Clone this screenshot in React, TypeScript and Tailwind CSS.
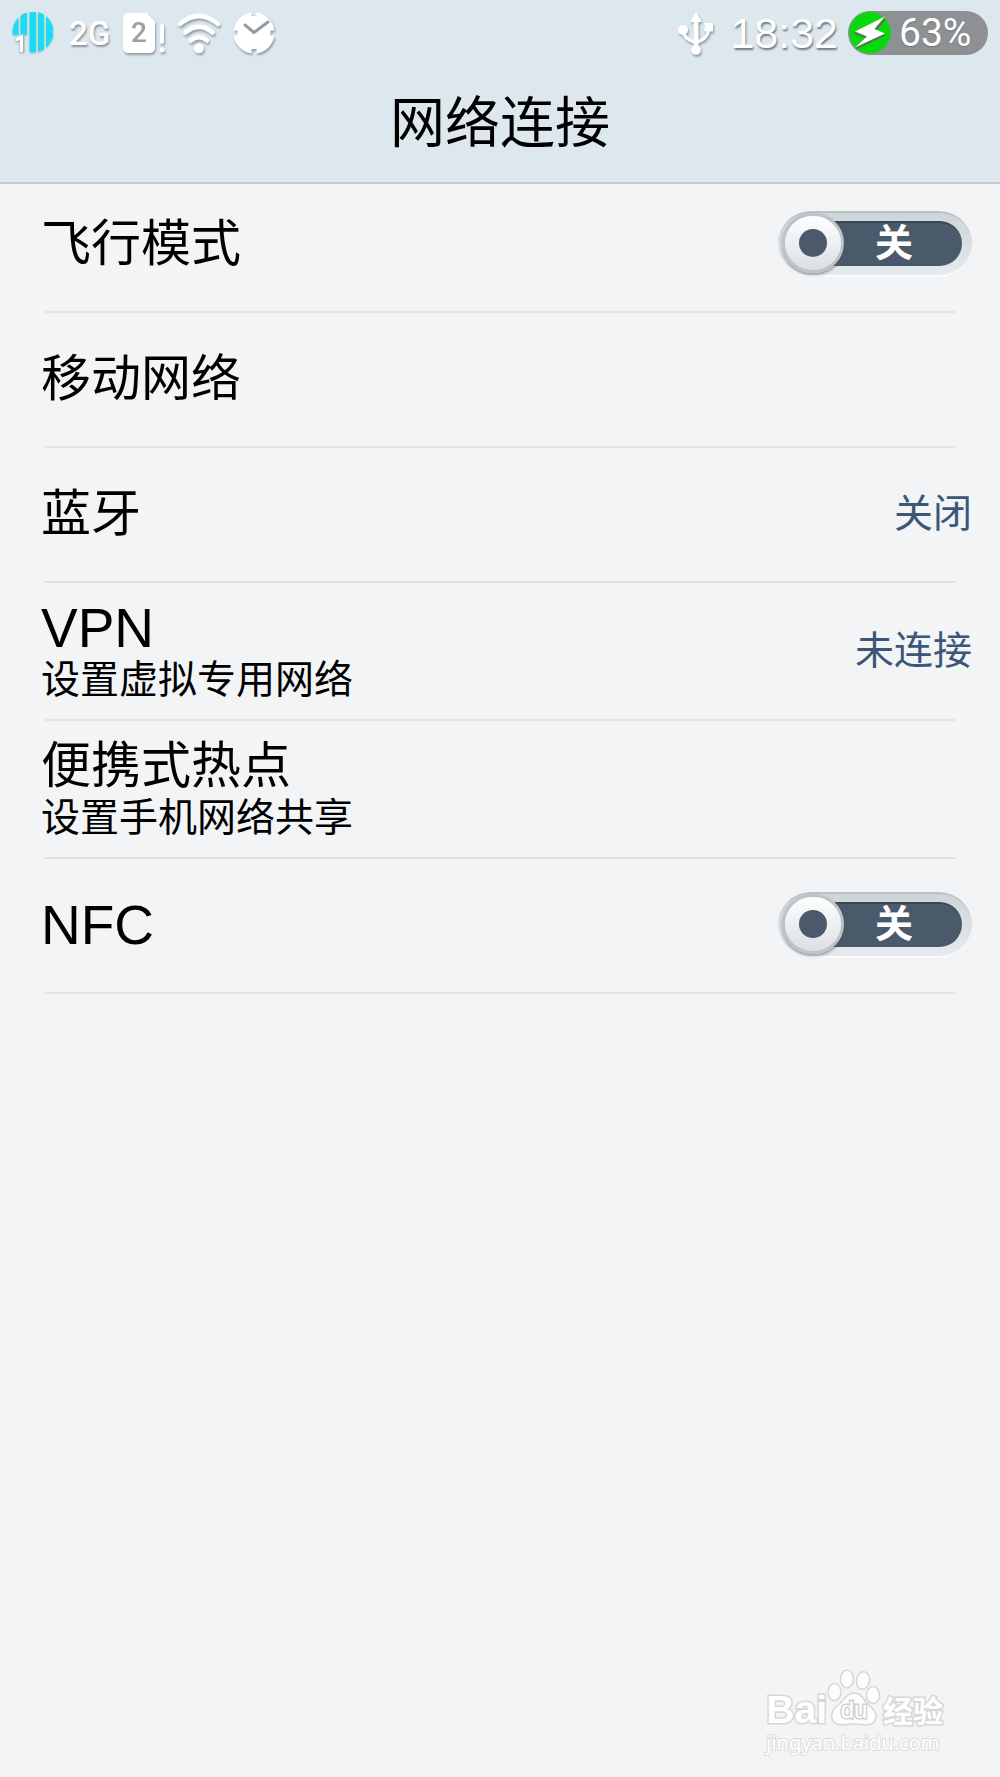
import { useId, useState } from "react";
import type { ReactNode } from "react";

const iconShadow = "shrink-0 drop-shadow-[1px_2px_1px_rgba(90,105,115,0.6)]";

function CarrierIcon() {
  return (
    <svg aria-hidden="true" className="h-[42px] w-[42px] shrink-0 drop-shadow-[0_1px_1px_rgba(90,130,140,0.4)]" viewBox="0 0 42 42">
      <defs>
        <clipPath id="carrier">
          <circle cx="21" cy="20" r="20.5" />
        </clipPath>
      </defs>
      <g clipPath="url(#carrier)" fill="#1cdcf2">
        <rect x="0" y="0" width="6.500" height="23" />
        <rect x="8.500" y="0" width="6.500" height="23" />
        <rect x="17.500" y="0" width="6.500" height="42" />
        <rect x="26" y="0" width="6" height="42" />
        <rect x="34" y="0" width="7" height="42" />
      </g>
      <path d="M4 28.500 L10 25.500 V40.500" fill="none" stroke="#9aa8b0" strokeWidth="4.500" />
      <path d="M4 28 L9.500 25 V40" fill="none" stroke="#fff" strokeWidth="3.200" />
    </svg>
  );
}

function SimIcon() {
  return (
    <span className={`flex items-end gap-1 ${iconShadow}`}>
      <span className="flex h-10 w-8 items-center justify-center rounded-[5px] bg-white font-['Roboto',sans-serif] text-[28px] leading-none font-medium text-[#98a1a6] [clip-path:polygon(0_0,75%_0,100%_22%,100%_100%,0_100%)]">
        2
      </span>
      <svg aria-hidden="true" className="h-[30px] w-1.5" viewBox="0 0 6 30">
        <rect x="1" y="1" width="4" height="20" rx="2" fill="#fff" />
        <circle cx="3" cy="27" r="2.500" fill="#fff" />
      </svg>
    </span>
  );
}

function WifiIcon() {
  return (
    <svg aria-hidden="true" className={`h-[42px] w-11 ${iconShadow}`} viewBox="0 0 44 42" fill="none" stroke="#fff" strokeWidth="4.600" strokeLinecap="round">
      <path d="M3 12 Q22 -4 41 12" />
      <path d="M8.500 20.500 Q22 9 35.500 20.500" />
      <path d="M14 28.500 Q22 22 30 28.500" />
      <circle cx="22" cy="36.500" r="4.800" fill="#fff" stroke="none" />
    </svg>
  );
}

function ClockIcon() {
  return (
    <svg aria-hidden="true" className={`h-[42px] w-[42px] ${iconShadow}`} viewBox="0 0 42 42">
      <path
        d="M18.500 0.600 V4 H23.500 V0.600 A20.500 20.500 0 0 1 41.300 18.500 H37.500 V23.500 H41.300 A20.500 20.500 0 0 1 23.500 41.300 V37 H18.500 V41.300 A20.500 20.500 0 0 1 0.700 23.500 H4.500 V18.500 H0.700 A20.500 20.500 0 0 1 18.500 0.600 Z"
        fill="#fff"
      />
      <path d="M12 13 L21 20.500 L35 10" fill="none" stroke="#929ca2" strokeWidth="3" strokeLinecap="round" strokeLinejoin="round" />
    </svg>
  );
}

function UsbIcon() {
  return (
    <svg aria-hidden="true" className={`h-[43px] w-9 ${iconShadow}`} viewBox="0 0 36 43">
      <path d="M18 0 L24 10 H12 Z" fill="#fff" />
      <path d="M18 8 V38" stroke="#fff" strokeWidth="4.800" />
      <path d="M5 18 Q6 28 18 30 Q30 28 31 16" fill="none" stroke="#fff" strokeWidth="3" />
      <circle cx="5" cy="18" r="5" fill="#fff" />
      <rect x="26.500" y="11" width="8.500" height="8.500" fill="#fff" />
      <circle cx="18" cy="38" r="4.800" fill="#fff" />
    </svg>
  );
}

function Battery() {
  return (
    <div className="flex h-11 w-[140px] items-center gap-[7px] rounded-full bg-[#8e9193]">
      <svg aria-hidden="true" className="h-11 w-11 shrink-0" viewBox="0 0 44 44">
        <circle cx="22" cy="22" r="21.500" fill="#6fa573" />
        <circle cx="22" cy="21.500" r="20.500" fill="#08d80d" />
        <path d="M37 8 L7 22.500 L19 27 L8 37.500 L36 24.500 L27 20.500 Z" fill="#4c7c50" stroke="#4c7c50" strokeWidth="1.500" />
        <path d="M37 5.500 L7 20.500 L19 25.500 L7 36.500 L37 22.500 L26.500 18 Z" fill="#fff" />
      </svg>
      <span className="font-['Roboto',sans-serif] text-[39px] leading-none text-white [text-shadow:0_1px_1px_#6f7375]">63%</span>
    </div>
  );
}

function StatusBar() {
  return (
    <div className="flex h-[66px] items-center justify-between px-3">
      <div className="flex items-center">
        <CarrierIcon />
        <span className="ml-[15px] w-[54px] font-['Roboto',sans-serif] text-[33px] leading-none font-medium text-white [text-shadow:1px_2px_2px_#88949c]">2G</span>
        <SimIcon />
        <span className="ml-3 flex gap-3">
          <WifiIcon />
          <ClockIcon />
        </span>
      </div>
      <div className="flex items-center">
        <UsbIcon />
        <time className="mr-2.5 ml-4 text-[43px] leading-none text-white [text-shadow:1px_2px_2px_#6d7980]">18:32</time>
        <Battery />
      </div>
    </div>
  );
}

function Toggle({ id }: { id: string }) {
  const [on, setOn] = useState(false);
  return (
    <span className="relative flex h-[66px] w-[194px] shrink-0 items-center rounded-full border-t-2 border-b-2 border-t-[#b9c2c7] border-b-[#fafbfc] bg-linear-to-b from-[#cdd5d9] to-[#e5ebef]">
      <input
        id={id}
        type="checkbox"
        role="switch"
        checked={on}
        onChange={() => setOn(!on)}
        className="absolute inset-0 z-10 h-full w-full cursor-pointer opacity-0"
      />
      <span
        className={`mr-2.5 ml-3 flex h-[45px] flex-1 items-center justify-center rounded-full border-t-2 border-[#3a4654] bg-[#4b5a6b] pb-1 text-[38px] leading-none font-bold text-white ${on ? "pr-[50px]" : "pl-9"}`}
      >
        {on ? "开" : "关"}
      </span>
      <span
        className={`absolute top-0 flex h-[60px] w-[62px] items-center justify-center rounded-full border-[3px] border-[#bdc4c8] bg-linear-to-b from-white to-[#dcdfe2] shadow-[0_2px_3px_rgba(70,80,85,0.5)] ${on ? "right-1" : "left-1"}`}
      >
        <span className="h-7 w-7 rounded-full bg-[#4b5a6b]" />
      </span>
    </span>
  );
}

type RowProps = { title: string; latin?: boolean; detail?: string; value?: string; toggle?: boolean; first?: boolean };

function Row({ title, latin, detail, value, toggle, first }: RowProps) {
  const id = useId();
  const height = first ? "h-[127px] pb-2" : detail ? "h-[136px]" : "h-[133px] pb-0.5";
  const titleStyle = latin ? "text-[55px] leading-[54px]" : "text-[50px] leading-[54px]";
  const cls = `flex w-full items-center justify-between pr-7 pl-[41px] text-left ${height}`;
  const body: ReactNode = (
    <>
      <span className={detail ? "flex flex-col pt-1" : "flex flex-col"}>
        <span className={titleStyle}>{title}</span>
        {detail && <span className="text-[39px] leading-[50px]">{detail}</span>}
      </span>
      {value && <span className="text-[39px] leading-[50px] text-[#3b5676]">{value}</span>}
      {toggle && <Toggle id={id} />}
    </>
  );
  return (
    <li>
      {toggle ? (
        <label htmlFor={id} className={cls}>
          {body}
        </label>
      ) : (
        <button type="button" className={cls}>
          {body}
        </button>
      )}
      <div className="mx-[45px] h-0.5 bg-[#e0e2e4]" />
    </li>
  );
}

const rows: RowProps[] = [
  { title: "飞行模式", toggle: true, first: true },
  { title: "移动网络" },
  { title: "蓝牙", value: "关闭" },
  { title: "VPN", latin: true, detail: "设置虚拟专用网络", value: "未连接" },
  { title: "便携式热点", detail: "设置手机网络共享" },
  { title: "NFC", latin: true, toggle: true },
];

function Watermark() {
  const outline = "text-white [-webkit-text-stroke:3px_#d6d7d9] [paint-order:stroke_fill]";
  return (
    <footer className="mt-auto mr-[57px] mb-[18px] flex flex-col items-start self-end">
      <div className="flex items-end">
        <span className={`text-[39px] leading-[34px] font-bold ${outline}`}>Bai</span>
        <span className="relative flex h-[58px] w-[54px] items-end justify-center">
          <svg aria-hidden="true" className="absolute inset-0 h-full w-full" viewBox="0 0 54 58" fill="#fdfdfd" stroke="#d6d7d9" strokeWidth="1.500">
            <ellipse cx="7.500" cy="23" rx="6.500" ry="8.500" />
            <ellipse cx="20" cy="10" rx="6.500" ry="8.800" />
            <ellipse cx="36" cy="11.500" rx="6.500" ry="8.800" transform="rotate(8 36 11.500)" />
            <ellipse cx="46" cy="26" rx="6.500" ry="8.500" />
            <path d="M27 24 C35 24 36 31 42 36 C49 42 51 48 47 53 C43 58 35 55 27 55 C19 55 11 58 7 53 C3 48 4 42 11 36 C18 31 19 24 27 24 Z" />
          </svg>
          <span className="relative text-[24px] leading-[34px] text-white [-webkit-text-stroke:3px_#cfd0d2] [paint-order:stroke_fill]">du</span>
        </span>
        <span className={`ml-0.5 text-[30px] leading-[30px] font-bold ${outline}`}>经验</span>
      </div>
      <span className="font-['Noto_Sans',sans-serif] text-[20px] leading-[32px] text-white [-webkit-text-stroke:2px_#dcdddf] [paint-order:stroke_fill]">
        jingyan.baidu.com
      </span>
    </footer>
  );
}

export default function App() {
  return (
    <div className="flex min-h-screen flex-col bg-[#f2f4f6] font-['Liberation_Sans','Noto_Sans_CJK_SC',sans-serif] text-black">
      <header className="border-b-2 border-[#c0cad1] bg-[#dde8ee]">
        <StatusBar />
        <h1 className="flex h-[116px] items-center justify-center pb-0.5 text-[55px] leading-none">网络连接</h1>
      </header>
      <ul>
        {rows.map((r) => (
          <Row key={r.title} {...r} />
        ))}
      </ul>
      <Watermark />
    </div>
  );
}
